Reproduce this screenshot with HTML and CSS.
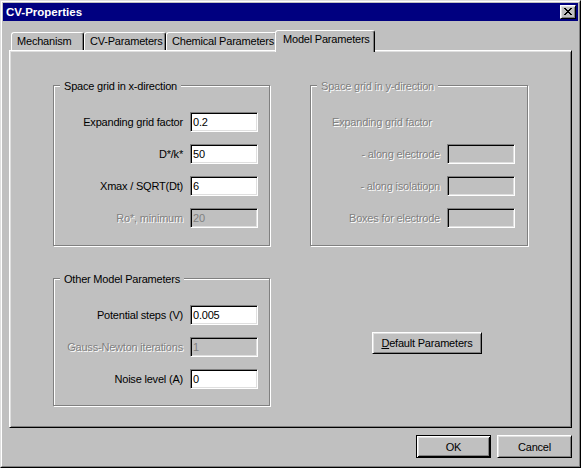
FILE: index.html
```html
<!DOCTYPE html>
<html>
<head>
<meta charset="utf-8">
<title>CV-Properties</title>
<link rel="stylesheet" href="styles.css">
</head>
<body>
<div class="window">
  <div class="frame">
    <div class="titlebar">
      <span class="title">CV-Properties</span>
      <span class="close-btn">
        <svg width="8" height="7" viewBox="0 0 8 7" shape-rendering="crispEdges"><path fill="#000" d="M0 0h2v1H0zM6 0h2v1H6zM1 1h2v1H1zM5 1h2v1H5zM2 2h4v1H2zM3 3h2v1H3zM2 4h4v1H2zM1 5h2v1H1zM5 5h2v1H5zM0 6h2v1H0zM6 6h2v1H6z"/></svg>
      </span>
    </div>
    <div class="client">
      <div class="tabs">
        <div class="tab tab-mech">Mechanism</div>
        <div class="tab tab-cv">CV-Parameters</div>
        <div class="tab tab-chem">Chemical Parameters</div>
        <div class="tab tab-sel">Model Parameters</div>
      </div>
      <div class="panel">
        <div class="group">
          <span class="legend">Space grid in x-direction</span>
          <div class="rows">
            <label class="lbl">Expanding grid factor</label><input class="edit" type="text" value="0.2">
            <label class="lbl">D*/k*</label><input class="edit" type="text" value="50">
            <label class="lbl">Xmax / SQRT(Dt)</label><input class="edit" type="text" value="6">
            <label class="lbl dis">Ro*, minimum</label><input class="edit" type="text" value="20" disabled>
          </div>
        </div>
        <div class="group">
          <span class="legend dis">Space grid in y-direction</span>
          <div class="rows">
            <label class="lbl dis row-head">Expanding grid factor</label>
            <label class="lbl dis">- along electrode</label><input class="edit" type="text" value="" disabled>
            <label class="lbl dis">- along isolatiopn</label><input class="edit" type="text" value="" disabled>
            <label class="lbl dis">Boxes for electrode</label><input class="edit" type="text" value="" disabled>
          </div>
        </div>
        <div class="group">
          <span class="legend">Other Model Parameters</span>
          <div class="rows">
            <label class="lbl">Potential steps (V)</label><input class="edit" type="text" value="0.005">
            <label class="lbl dis">Gauss-Newton iterations</label><input class="edit" type="text" value="1" disabled>
            <label class="lbl">Noise level (A)</label><input class="edit" type="text" value="0">
          </div>
        </div>
        <button class="btn btn-wide" type="button"><u>D</u>efault Parameters</button>
      </div>
      <div class="buttons">
        <button class="btn btn-default" type="button">OK</button>
        <button class="btn" type="button">Cancel</button>
      </div>
    </div>
  </div>
</div>
</body>
</html>
```

FILE: styles.css
```css
* {
  box-sizing: border-box;
}

body {
  margin: 0;
  background: #c0c0c0;
  font-family: "Liberation Sans", Arial, sans-serif;
  font-size: 11px;
  letter-spacing: -0.2px;
  color: #000;
}

.window {
  width: 581px;
  height: 468px;
  border: 1px solid;
  border-color: #dfdfdf #000 #000 #dfdfdf;
  background: #c0c0c0;
}

.frame {
  height: 100%;
  border: 1px solid;
  border-color: #fff #808080 #808080 #fff;
  padding: 1px;
  display: flex;
  flex-direction: column;
}

.titlebar {
  height: 18px;
  flex: none;
  background: #000080;
  color: #fff;
  display: flex;
  align-items: center;
  justify-content: space-between;
  padding: 0 2px 0 3px;
}

.title {
  font-weight: bold;
  font-size: 11.5px;
  letter-spacing: 0;
  line-height: 18px;
}

.close-btn {
  width: 16px;
  height: 14px;
  background: #c0c0c0;
  border: 1px solid;
  border-color: #fff #000 #000 #fff;
  box-shadow: inset 1px 1px #dfdfdf, inset -1px -1px #808080;
  display: flex;
  align-items: center;
  justify-content: center;
  padding: 0 1px 1px 0;
}

.close-btn svg {
  display: block;
}

.client {
  flex: 1;
  padding: 9px 6px 0;
}

.tabs {
  display: flex;
  align-items: flex-end;
  height: 20px;
  padding-left: 2px;
  position: relative;
  z-index: 1;
}

.tab {
  height: 18px;
  line-height: 16px;
  padding-left: 5px;
  white-space: nowrap;
  overflow: hidden;
  background: #c0c0c0;
  border: 1px solid;
  border-bottom: none;
  border-color: #fff #000 transparent #fff;
  border-radius: 3px 3px 0 0;
  box-shadow: inset -1px 0 #808080;
  flex: none;
}

.tab-mech { width: 73px; }
.tab-cv { width: 82px; }
.tab-chem { width: 111px; }

.tab-sel {
  width: 100px;
  height: 22px;
  margin: 0 -2px -2px;
  padding-left: 7px;
  position: relative;
}

.panel {
  height: 378px;
  border: 1px solid;
  border-color: #fff #000 #000 #fff;
  box-shadow: inset 1px 1px #dfdfdf, inset -1px -1px #808080;
  display: grid;
  grid-template-columns: 217px 218px;
  grid-template-rows: 161px 128px;
  column-gap: 40px;
  row-gap: 32px;
  align-content: start;
  padding: 34px 0 0 43px;
}

.group {
  position: relative;
  border: 1px solid #808080;
  box-shadow: inset 1px 1px #fff, 1px 1px #fff;
  padding-top: 26px;
}

.legend {
  position: absolute;
  top: -6px;
  left: 6px;
  padding: 0 4px;
  line-height: 13px;
  background: #c0c0c0;
  white-space: nowrap;
}

.rows {
  display: grid;
  grid-template-columns: 129px 68px;
  column-gap: 7px;
  grid-auto-rows: 20px;
  row-gap: 12px;
  align-items: center;
}

.lbl {
  text-align: right;
  white-space: nowrap;
}

.row-head {
  grid-column: 1 / -1;
  justify-self: start;
  margin-left: 21px;
}

.dis {
  color: #808080;
  text-shadow: 1px 1px 0 #fff;
}

.edit {
  width: 68px;
  height: 20px;
  margin: 0;
  padding: 0 2px;
  font: inherit;
  letter-spacing: inherit;
  color: #000;
  background: #fff;
  border: 1px solid;
  border-color: #808080 #fff #fff #808080;
  box-shadow: inset 1px 1px #000, inset -1px -1px #dfdfdf;
  border-radius: 0;
  outline: none;
}

.edit:disabled {
  background: #c0c0c0;
  color: #808080;
  -webkit-text-fill-color: #808080;
  opacity: 1;
}

.btn {
  width: 75px;
  height: 23px;
  margin: 0;
  padding: 0;
  font: inherit;
  letter-spacing: inherit;
  color: #000;
  background: #c0c0c0;
  border: 1px solid;
  border-color: #fff #000 #000 #fff;
  box-shadow: inset 1px 1px #dfdfdf, inset -1px -1px #808080;
  border-radius: 0;
  text-align: center;
}

.btn-wide {
  width: 110px;
  height: 22px;
  justify-self: start;
  align-self: start;
  margin: 54px 0 0 62px;
}

.btn-default {
  border-color: #000;
  box-shadow: inset 1px 1px #fff, inset -1px -1px #000, inset 2px 2px #dfdfdf, inset -2px -2px #808080;
}

.buttons {
  display: flex;
  justify-content: flex-end;
  gap: 6px;
  margin-top: 7px;
}
```
